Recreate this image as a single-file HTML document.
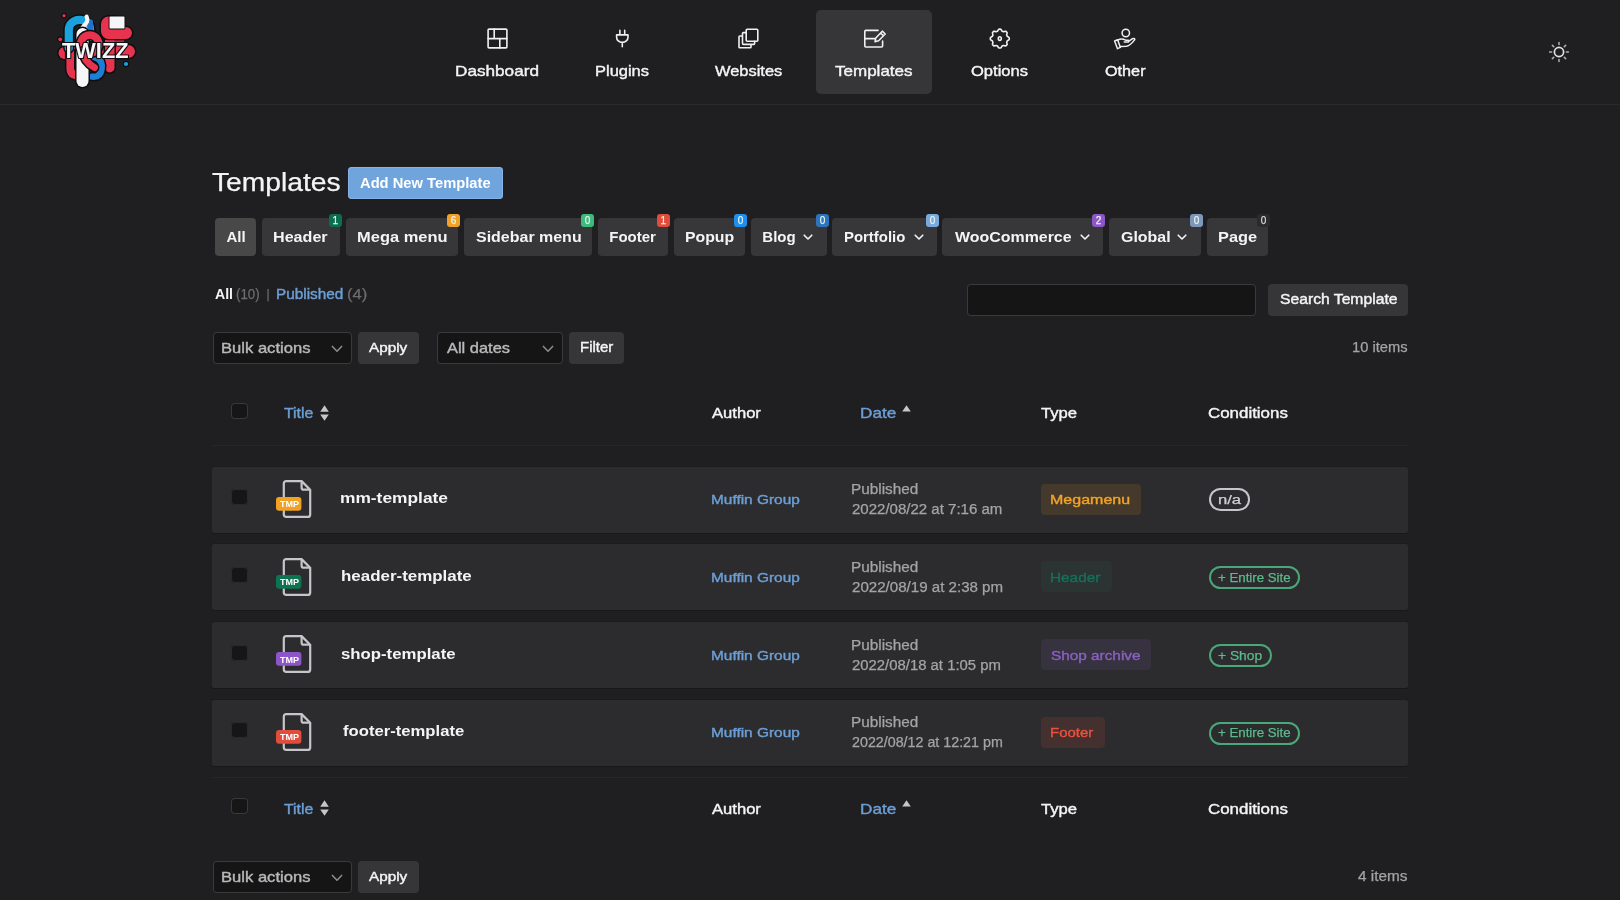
<!DOCTYPE html>
<html lang="en">
<head>
<meta charset="utf-8">
<title>Templates</title>
<style>
html,body{margin:0;padding:0}
body{width:1620px;height:900px;overflow:hidden;position:relative;background:#1f1f21;font-family:'Liberation Sans',sans-serif}
header,nav,main,ul,li,h1,article{margin:0;padding:0;list-style:none;font-weight:normal}
#app{position:absolute;left:0;top:0;width:1620px;height:900px;will-change:transform}
.b{position:absolute;display:block;box-sizing:border-box;border:0;padding:0;margin:0}
.t{position:absolute;display:block;white-space:nowrap;line-height:1;margin:0;padding:0;transform-origin:0 0;text-decoration:none;font-family:'Liberation Sans',sans-serif}
</style>
</head>
<body>
<div id="app">
<header>
<div class="b" style="left:0px;top:104px;width:1620px;height:1px;background:#2a2a2c;"></div>
<svg class="b" style="left:50px;top:5px" width="100" height="90" viewBox="0 0 100 90" role="img" aria-label="TWIZZ logo"><circle cx="14" cy="10.7" r="2.7" fill="#0e0e10"/><circle cx="14" cy="10.7" r="1.6" fill="#e8334f"/><circle cx="10.2" cy="34.3" r="3.0" fill="#0e0e10"/><circle cx="10.2" cy="34.3" r="1.9" fill="#e8334f"/><circle cx="76" cy="59" r="3.2" fill="#0e0e10"/><circle cx="76" cy="59" r="2.1" fill="#1aa2df"/><rect x="7.0" y="40.5" width="35.0" height="15.0" rx="7.5" fill="#0e0e10"/><rect x="8.5" y="42" width="32" height="12" rx="6" fill="#e8334f"/><path d="M20.2 47 V63 Q20.2 70.7 29 70.7" fill="none" stroke="#0e0e10" stroke-width="10.6" stroke-linecap="round" stroke-linejoin="round"/><path d="M20.2 47 V63 Q20.2 70.7 29 70.7" fill="none" stroke="#e8334f" stroke-width="7.6" stroke-linecap="round" stroke-linejoin="round"/><rect x="50.5" y="38.5" width="36.0" height="16.0" rx="8.0" fill="#0e0e10"/><rect x="52" y="40" width="33" height="13" rx="6.5" fill="#e8334f"/><rect x="53.5" y="28.5" width="12.5" height="40.5" rx="6.2" fill="#0e0e10"/><rect x="55" y="30" width="9.5" height="37.5" rx="4.7" fill="#e8334f"/><path d="M58.5 11.5 H66 V22 H76 A6 6 0 0 1 76 34 H58.5 A7.5 7.5 0 0 1 51 26.5 V19 A7.5 7.5 0 0 1 58.5 11.5 Z" fill="#0e0e10" stroke="#0e0e10" stroke-width="3" stroke-linejoin="round"/><path d="M58.5 11.5 H66 V22 H76 A6 6 0 0 1 76 34 H58.5 A7.5 7.5 0 0 1 51 26.5 V19 A7.5 7.5 0 0 1 58.5 11.5 Z" fill="#e8334f"/><rect x="58.6" y="10.6" width="16.8" height="13.8" rx="1.3" fill="#0e0e10"/><rect x="59.5" y="11.5" width="15" height="12" rx="0.4" fill="#f6f6f9"/><path d="M56 36.2 H74 M57 38.6 H72" stroke="#e8334f" stroke-width="1.3" fill="none"/><path d="M18.8 43 V25 C18.8 12.5 40 11 40 24 V32" fill="none" stroke="#0e0e10" stroke-width="11.2" stroke-linecap="round" stroke-linejoin="round"/><path d="M18.8 43 V25 C18.8 12.5 40 11 40 24 V32" fill="none" stroke="#1aa2df" stroke-width="8.2" stroke-linecap="round" stroke-linejoin="round"/><path d="M40.3 17 V30" stroke="#1f72c8" stroke-width="5.4" stroke-linecap="round" fill="none"/><path d="M36 19 L39 27 L30 31 L31 24 Z" fill="#b4c0ea"/><path d="M36.6 11.6 C40.5 19.5 29.5 19.5 28.8 33" stroke="#f6f6f9" stroke-width="4.2" stroke-linecap="round" fill="none"/><path d="M44 52 C52 53.5 52.2 60 51.6 64 C50.6 71.5 46 72 42 71.6" fill="none" stroke="#0e0e10" stroke-width="9.4" stroke-linecap="round" stroke-linejoin="round"/><path d="M44 52 C52 53.5 52.2 60 51.6 64 C50.6 71.5 46 72 42 71.6" fill="none" stroke="#1b7fd6" stroke-width="6.4" stroke-linecap="round" stroke-linejoin="round"/><rect x="25.0" y="21.5" width="15.0" height="62.0" rx="7.5" fill="#0e0e10"/><rect x="26.5" y="23" width="12" height="59" rx="6" fill="#f6f6f9"/><path d="M39.8 30 A9 9 0 1 1 39.7 30 Z" fill="none" stroke="#0e0e10" stroke-width="10.6" stroke-linecap="round" stroke-linejoin="round"/><path d="M39.8 30 A9 9 0 1 1 39.7 30 Z" fill="none" stroke="#e8334f" stroke-width="7.6" stroke-linecap="round" stroke-linejoin="round"/><path d="M33 46 C33.5 55 39 59.5 44.5 62.5" fill="none" stroke="#0e0e10" stroke-width="10.0" stroke-linecap="round" stroke-linejoin="round"/><path d="M33 46 C33.5 55 39 59.5 44.5 62.5" fill="none" stroke="#e8334f" stroke-width="7" stroke-linecap="round" stroke-linejoin="round"/><text x="12" y="53" font-family="'Liberation Sans',sans-serif" font-weight="700" font-size="21.5" textLength="66.5" lengthAdjust="spacingAndGlyphs" fill="#f6f6f9" stroke="#0e0e10" stroke-width="2.2" stroke-linejoin="round" style="paint-order:stroke fill">TWIZZ</text></svg>
<nav>
<div class="b navact" style="left:816px;top:10px;width:116px;height:84px;background:#363638;border-radius:5px;"></div>
<a class="t" style="left:454.5px;top:63px;font-size:15px;font-weight:500;color:#f4f4f5;transform:scaleX(1.1445);-webkit-text-stroke:0.4px;">Dashboard</a>
<a class="t" style="left:594.9px;top:63px;font-size:15px;font-weight:500;color:#f4f4f5;transform:scaleX(1.0976);-webkit-text-stroke:0.4px;">Plugins</a>
<a class="t" style="left:714.9px;top:63px;font-size:15px;font-weight:500;color:#f4f4f5;transform:scaleX(1.0951);-webkit-text-stroke:0.4px;">Websites</a>
<a class="t" style="left:835.2px;top:63px;font-size:15px;font-weight:500;color:#f4f4f5;transform:scaleX(1.1344);-webkit-text-stroke:0.4px;">Templates</a>
<a class="t" style="left:970.9px;top:63px;font-size:15px;font-weight:500;color:#f4f4f5;transform:scaleX(1.1016);-webkit-text-stroke:0.4px;">Options</a>
<a class="t" style="left:1104.6px;top:63px;font-size:15px;font-weight:500;color:#f4f4f5;transform:scaleX(1.0804);-webkit-text-stroke:0.4px;">Other</a>
<svg class="b" style="left:485px;top:26px" width="25" height="25" viewBox="0 0 25 25" fill="none" stroke="#f0f0f2" stroke-width="1.6" stroke-linecap="round" stroke-linejoin="round"><rect x="3.1" y="3.1" width="18.8" height="18.8" rx="1"/><path d="M9.2 3.1 V12.6 M3.1 12.6 H21.9 M14.8 12.6 V21.9"/></svg>
<svg class="b" style="left:612px;top:27px" width="21" height="23" viewBox="0 0 21 23" fill="none" stroke="#f0f0f2" stroke-width="1.6" stroke-linecap="round" stroke-linejoin="round"><path d="M7.9 3.4 V7.6 M12.7 3.4 V7.6 M4.6 7.9 H16 V10.2 A5.7 5.2 0 0 1 4.6 10.2 Z M10.3 15.4 V19.8"/></svg>
<svg class="b" style="left:735px;top:26px" width="26" height="25" viewBox="0 0 26 25" fill="none" stroke="#f0f0f2" stroke-width="1.6" stroke-linecap="round" stroke-linejoin="round"><rect x="11.2" y="3.2" width="11.6" height="12" rx="1"/><path d="M11.2 6.6 H8.3 Q7.5 6.6 7.5 7.4 V17.6 Q7.5 18.4 8.3 18.4 H18.8 Q19.6 18.4 19.6 17.6 V15.4 M7.5 10 H4.8 Q4 10 4 10.8 V21 Q4 21.8 4.8 21.8 H15.2 Q16 21.8 16 21 V18.6"/></svg>
<svg class="b" style="left:861px;top:26px" width="28" height="25" viewBox="0 0 28 25" fill="none" stroke="#f0f0f2" stroke-width="1.6" stroke-linecap="round" stroke-linejoin="round"><path d="M17 4.4 H4.8 Q3.8 4.4 3.8 5.4 V20 Q3.8 21 4.8 21 H20.6 Q21.6 21 21.6 20 V15 M3.8 12.6 H14"/><path d="M21.3 5.2 L24.2 8 L17.6 14.8 L14 15.6 L14.8 12 Z M19.6 7 L22.4 9.8"/></svg>
<svg class="b" style="left:987px;top:26px" width="26" height="26" viewBox="0 0 26 26" fill="none" stroke="#f0f0f2" stroke-width="1.6" stroke-linecap="round" stroke-linejoin="round"><path d="M22.25 12.60 L22.25 12.68 L22.25 12.76 L22.25 12.85 L22.24 12.93 L22.24 13.01 L22.24 13.09 L22.23 13.18 L22.23 13.26 L22.22 13.34 L22.21 13.42 L22.18 13.50 L22.12 13.58 L22.05 13.65 L21.97 13.73 L21.90 13.80 L21.81 13.87 L21.73 13.93 L21.64 14.00 L21.56 14.07 L21.47 14.13 L21.37 14.19 L21.28 14.25 L21.19 14.31 L21.09 14.36 L21.00 14.42 L20.91 14.47 L20.82 14.52 L20.73 14.58 L20.64 14.63 L20.55 14.68 L20.47 14.73 L20.39 14.78 L20.31 14.82 L20.23 14.87 L20.19 14.93 L20.17 14.99 L20.15 15.06 L20.13 15.12 L20.11 15.19 L20.08 15.25 L20.06 15.31 L20.04 15.38 L20.01 15.44 L19.99 15.50 L19.96 15.57 L19.93 15.63 L19.91 15.69 L19.88 15.75 L19.85 15.81 L19.82 15.88 L19.80 15.94 L19.77 16.00 L19.74 16.06 L19.71 16.12 L19.67 16.18 L19.66 16.25 L19.68 16.34 L19.70 16.43 L19.73 16.52 L19.75 16.61 L19.78 16.71 L19.80 16.81 L19.83 16.91 L19.86 17.01 L19.89 17.11 L19.91 17.22 L19.94 17.32 L19.96 17.43 L19.99 17.54 L20.01 17.65 L20.03 17.76 L20.04 17.86 L20.06 17.97 L20.07 18.08 L20.08 18.18 L20.08 18.29 L20.08 18.39 L20.08 18.50 L20.07 18.60 L20.04 18.67 L19.99 18.74 L19.93 18.80 L19.88 18.86 L19.82 18.92 L19.77 18.98 L19.71 19.04 L19.65 19.10 L19.60 19.16 L19.54 19.22 L19.48 19.28 L19.42 19.34 L19.36 19.40 L19.30 19.45 L19.24 19.51 L19.18 19.57 L19.12 19.62 L19.06 19.68 L19.00 19.73 L18.94 19.79 L18.87 19.84 L18.80 19.87 L18.70 19.88 L18.59 19.88 L18.49 19.88 L18.38 19.88 L18.28 19.87 L18.17 19.86 L18.06 19.84 L17.96 19.83 L17.85 19.81 L17.74 19.79 L17.63 19.76 L17.52 19.74 L17.42 19.71 L17.31 19.69 L17.21 19.66 L17.11 19.63 L17.01 19.60 L16.91 19.58 L16.81 19.55 L16.72 19.53 L16.63 19.50 L16.54 19.48 L16.45 19.46 L16.38 19.47 L16.32 19.51 L16.26 19.54 L16.20 19.57 L16.14 19.60 L16.08 19.62 L16.01 19.65 L15.95 19.68 L15.89 19.71 L15.83 19.73 L15.77 19.76 L15.70 19.79 L15.64 19.81 L15.58 19.84 L15.51 19.86 L15.45 19.88 L15.39 19.91 L15.32 19.93 L15.26 19.95 L15.19 19.97 L15.13 19.99 L15.07 20.03 L15.02 20.11 L14.98 20.19 L14.93 20.27 L14.88 20.35 L14.83 20.44 L14.78 20.53 L14.72 20.62 L14.67 20.71 L14.62 20.80 L14.56 20.89 L14.51 20.99 L14.45 21.08 L14.39 21.17 L14.33 21.27 L14.27 21.36 L14.20 21.44 L14.13 21.53 L14.07 21.61 L14.00 21.70 L13.93 21.77 L13.85 21.85 L13.78 21.92 L13.70 21.98 L13.62 22.01 L13.54 22.02 L13.46 22.03 L13.38 22.03 L13.29 22.04 L13.21 22.04 L13.13 22.04 L13.05 22.05 L12.96 22.05 L12.88 22.05 L12.80 22.05 L12.72 22.05 L12.64 22.05 L12.55 22.05 L12.47 22.04 L12.39 22.04 L12.31 22.04 L12.22 22.03 L12.14 22.03 L12.06 22.02 L11.98 22.01 L11.90 21.98 L11.82 21.92 L11.75 21.85 L11.67 21.77 L11.60 21.70 L11.53 21.61 L11.47 21.53 L11.40 21.44 L11.33 21.36 L11.27 21.27 L11.21 21.17 L11.15 21.08 L11.09 20.99 L11.04 20.89 L10.98 20.80 L10.93 20.71 L10.88 20.62 L10.82 20.53 L10.77 20.44 L10.72 20.35 L10.67 20.27 L10.62 20.19 L10.58 20.11 L10.53 20.03 L10.47 19.99 L10.41 19.97 L10.34 19.95 L10.28 19.93 L10.21 19.91 L10.15 19.88 L10.09 19.86 L10.02 19.84 L9.96 19.81 L9.90 19.79 L9.83 19.76 L9.77 19.73 L9.71 19.71 L9.65 19.68 L9.59 19.65 L9.52 19.62 L9.46 19.60 L9.40 19.57 L9.34 19.54 L9.28 19.51 L9.22 19.47 L9.15 19.46 L9.06 19.48 L8.97 19.50 L8.88 19.53 L8.79 19.55 L8.69 19.58 L8.59 19.60 L8.49 19.63 L8.39 19.66 L8.29 19.69 L8.18 19.71 L8.08 19.74 L7.97 19.76 L7.86 19.79 L7.75 19.81 L7.64 19.83 L7.54 19.84 L7.43 19.86 L7.32 19.87 L7.22 19.88 L7.11 19.88 L7.01 19.88 L6.90 19.88 L6.80 19.87 L6.73 19.84 L6.66 19.79 L6.60 19.73 L6.54 19.68 L6.48 19.62 L6.42 19.57 L6.36 19.51 L6.30 19.45 L6.24 19.40 L6.18 19.34 L6.12 19.28 L6.06 19.22 L6.00 19.16 L5.95 19.10 L5.89 19.04 L5.83 18.98 L5.78 18.92 L5.72 18.86 L5.67 18.80 L5.61 18.74 L5.56 18.67 L5.53 18.60 L5.52 18.50 L5.52 18.39 L5.52 18.29 L5.52 18.18 L5.53 18.08 L5.54 17.97 L5.56 17.86 L5.57 17.76 L5.59 17.65 L5.61 17.54 L5.64 17.43 L5.66 17.32 L5.69 17.22 L5.71 17.11 L5.74 17.01 L5.77 16.91 L5.80 16.81 L5.82 16.71 L5.85 16.61 L5.87 16.52 L5.90 16.43 L5.92 16.34 L5.94 16.25 L5.93 16.18 L5.89 16.12 L5.86 16.06 L5.83 16.00 L5.80 15.94 L5.78 15.88 L5.75 15.81 L5.72 15.75 L5.69 15.69 L5.67 15.63 L5.64 15.57 L5.61 15.50 L5.59 15.44 L5.56 15.38 L5.54 15.31 L5.52 15.25 L5.49 15.19 L5.47 15.12 L5.45 15.06 L5.43 14.99 L5.41 14.93 L5.37 14.87 L5.29 14.82 L5.21 14.78 L5.13 14.73 L5.05 14.68 L4.96 14.63 L4.87 14.58 L4.78 14.52 L4.69 14.47 L4.60 14.42 L4.51 14.36 L4.41 14.31 L4.32 14.25 L4.23 14.19 L4.13 14.13 L4.04 14.07 L3.96 14.00 L3.87 13.93 L3.79 13.87 L3.70 13.80 L3.63 13.73 L3.55 13.65 L3.48 13.58 L3.42 13.50 L3.39 13.42 L3.38 13.34 L3.37 13.26 L3.37 13.18 L3.36 13.09 L3.36 13.01 L3.36 12.93 L3.35 12.85 L3.35 12.76 L3.35 12.68 L3.35 12.60 L3.35 12.52 L3.35 12.44 L3.35 12.35 L3.36 12.27 L3.36 12.19 L3.36 12.11 L3.37 12.02 L3.37 11.94 L3.38 11.86 L3.39 11.78 L3.42 11.70 L3.48 11.62 L3.55 11.55 L3.63 11.47 L3.70 11.40 L3.79 11.33 L3.87 11.27 L3.96 11.20 L4.04 11.13 L4.13 11.07 L4.23 11.01 L4.32 10.95 L4.41 10.89 L4.51 10.84 L4.60 10.78 L4.69 10.73 L4.78 10.68 L4.87 10.62 L4.96 10.57 L5.05 10.52 L5.13 10.47 L5.21 10.42 L5.29 10.38 L5.37 10.33 L5.41 10.27 L5.43 10.21 L5.45 10.14 L5.47 10.08 L5.49 10.01 L5.52 9.95 L5.54 9.89 L5.56 9.82 L5.59 9.76 L5.61 9.70 L5.64 9.63 L5.67 9.57 L5.69 9.51 L5.72 9.45 L5.75 9.39 L5.78 9.32 L5.80 9.26 L5.83 9.20 L5.86 9.14 L5.89 9.08 L5.93 9.02 L5.94 8.95 L5.92 8.86 L5.90 8.77 L5.87 8.68 L5.85 8.59 L5.82 8.49 L5.80 8.39 L5.77 8.29 L5.74 8.19 L5.71 8.09 L5.69 7.98 L5.66 7.88 L5.64 7.77 L5.61 7.66 L5.59 7.55 L5.57 7.44 L5.56 7.34 L5.54 7.23 L5.53 7.12 L5.52 7.02 L5.52 6.91 L5.52 6.81 L5.52 6.70 L5.53 6.60 L5.56 6.53 L5.61 6.46 L5.67 6.40 L5.72 6.34 L5.78 6.28 L5.83 6.22 L5.89 6.16 L5.95 6.10 L6.00 6.04 L6.06 5.98 L6.12 5.92 L6.18 5.86 L6.24 5.80 L6.30 5.75 L6.36 5.69 L6.42 5.63 L6.48 5.58 L6.54 5.52 L6.60 5.47 L6.66 5.41 L6.73 5.36 L6.80 5.33 L6.90 5.32 L7.01 5.32 L7.11 5.32 L7.22 5.32 L7.32 5.33 L7.43 5.34 L7.54 5.36 L7.64 5.37 L7.75 5.39 L7.86 5.41 L7.97 5.44 L8.08 5.46 L8.18 5.49 L8.29 5.51 L8.39 5.54 L8.49 5.57 L8.59 5.60 L8.69 5.62 L8.79 5.65 L8.88 5.67 L8.97 5.70 L9.06 5.72 L9.15 5.74 L9.22 5.73 L9.28 5.69 L9.34 5.66 L9.40 5.63 L9.46 5.60 L9.52 5.58 L9.59 5.55 L9.65 5.52 L9.71 5.49 L9.77 5.47 L9.83 5.44 L9.90 5.41 L9.96 5.39 L10.02 5.36 L10.09 5.34 L10.15 5.32 L10.21 5.29 L10.28 5.27 L10.34 5.25 L10.41 5.23 L10.47 5.21 L10.53 5.17 L10.58 5.09 L10.62 5.01 L10.67 4.93 L10.72 4.85 L10.77 4.76 L10.82 4.67 L10.88 4.58 L10.93 4.49 L10.98 4.40 L11.04 4.31 L11.09 4.21 L11.15 4.12 L11.21 4.03 L11.27 3.93 L11.33 3.84 L11.40 3.76 L11.47 3.67 L11.53 3.59 L11.60 3.50 L11.67 3.43 L11.75 3.35 L11.82 3.28 L11.90 3.22 L11.98 3.19 L12.06 3.18 L12.14 3.17 L12.22 3.17 L12.31 3.16 L12.39 3.16 L12.47 3.16 L12.55 3.15 L12.64 3.15 L12.72 3.15 L12.80 3.15 L12.88 3.15 L12.96 3.15 L13.05 3.15 L13.13 3.16 L13.21 3.16 L13.29 3.16 L13.38 3.17 L13.46 3.17 L13.54 3.18 L13.62 3.19 L13.70 3.22 L13.78 3.28 L13.85 3.35 L13.93 3.43 L14.00 3.50 L14.07 3.59 L14.13 3.67 L14.20 3.76 L14.27 3.84 L14.33 3.93 L14.39 4.03 L14.45 4.12 L14.51 4.21 L14.56 4.31 L14.62 4.40 L14.67 4.49 L14.72 4.58 L14.78 4.67 L14.83 4.76 L14.88 4.85 L14.93 4.93 L14.98 5.01 L15.02 5.09 L15.07 5.17 L15.13 5.21 L15.19 5.23 L15.26 5.25 L15.32 5.27 L15.39 5.29 L15.45 5.32 L15.51 5.34 L15.58 5.36 L15.64 5.39 L15.70 5.41 L15.77 5.44 L15.83 5.47 L15.89 5.49 L15.95 5.52 L16.01 5.55 L16.08 5.58 L16.14 5.60 L16.20 5.63 L16.26 5.66 L16.32 5.69 L16.38 5.73 L16.45 5.74 L16.54 5.72 L16.63 5.70 L16.72 5.67 L16.81 5.65 L16.91 5.62 L17.01 5.60 L17.11 5.57 L17.21 5.54 L17.31 5.51 L17.42 5.49 L17.52 5.46 L17.63 5.44 L17.74 5.41 L17.85 5.39 L17.96 5.37 L18.06 5.36 L18.17 5.34 L18.28 5.33 L18.38 5.32 L18.49 5.32 L18.59 5.32 L18.70 5.32 L18.80 5.33 L18.87 5.36 L18.94 5.41 L19.00 5.47 L19.06 5.52 L19.12 5.58 L19.18 5.63 L19.24 5.69 L19.30 5.75 L19.36 5.80 L19.42 5.86 L19.48 5.92 L19.54 5.98 L19.60 6.04 L19.65 6.10 L19.71 6.16 L19.77 6.22 L19.82 6.28 L19.88 6.34 L19.93 6.40 L19.99 6.46 L20.04 6.53 L20.07 6.60 L20.08 6.70 L20.08 6.81 L20.08 6.91 L20.08 7.02 L20.07 7.12 L20.06 7.23 L20.04 7.34 L20.03 7.44 L20.01 7.55 L19.99 7.66 L19.96 7.77 L19.94 7.88 L19.91 7.98 L19.89 8.09 L19.86 8.19 L19.83 8.29 L19.80 8.39 L19.78 8.49 L19.75 8.59 L19.73 8.68 L19.70 8.77 L19.68 8.86 L19.66 8.95 L19.67 9.02 L19.71 9.08 L19.74 9.14 L19.77 9.20 L19.80 9.26 L19.82 9.32 L19.85 9.39 L19.88 9.45 L19.91 9.51 L19.93 9.57 L19.96 9.63 L19.99 9.70 L20.01 9.76 L20.04 9.82 L20.06 9.89 L20.08 9.95 L20.11 10.01 L20.13 10.08 L20.15 10.14 L20.17 10.21 L20.19 10.27 L20.23 10.33 L20.31 10.38 L20.39 10.42 L20.47 10.47 L20.55 10.52 L20.64 10.57 L20.73 10.62 L20.82 10.68 L20.91 10.73 L21.00 10.78 L21.09 10.84 L21.19 10.89 L21.28 10.95 L21.37 11.01 L21.47 11.07 L21.56 11.13 L21.64 11.20 L21.73 11.27 L21.81 11.33 L21.90 11.40 L21.97 11.47 L22.05 11.55 L22.12 11.62 L22.18 11.70 L22.21 11.78 L22.22 11.86 L22.23 11.94 L22.23 12.02 L22.24 12.11 L22.24 12.19 L22.24 12.27 L22.25 12.35 L22.25 12.44 L22.25 12.52 Z"/><ellipse cx="12.8" cy="12.6" rx="1.5" ry="1.9"/></svg>
<svg class="b" style="left:1111px;top:26px" width="27" height="25" viewBox="0 0 27 25" fill="none" stroke="#f0f0f2" stroke-width="1.5" stroke-linecap="round" stroke-linejoin="round"><circle cx="14.8" cy="7" r="3.7"/><path d="M3.6 15 L6.6 13.8 L9.4 21.4 L6.4 22.6 Z"/><path d="M6.8 14.2 C9.5 12.6 12 12.8 14.5 14.2 H17.2 Q18.6 14.6 17.4 15.9 H13.2 M17.6 15.4 L21.6 12.6 Q23.4 12 23.8 13.6 C21.5 16.6 18.5 19.6 15.5 20.2 L9.2 20.6"/></svg>
</nav>
<svg class="b" style="left:1547.1px;top:39.9px" width="24" height="24" viewBox="0 0 24 24" fill="none" stroke="#e2e2e4" stroke-width="1.7" stroke-linecap="round"><circle cx="12" cy="12" r="4.6"/><path d="M19.40 12.00 L21.40 12.00 M17.23 17.23 L18.65 18.65 M12.00 19.40 L12.00 21.40 M6.77 17.23 L5.35 18.65 M4.60 12.00 L2.60 12.00 M6.77 6.77 L5.35 5.35 M12.00 4.60 L12.00 2.60 M17.23 6.77 L18.65 5.35 " stroke="#b2b2b5" stroke-width="1.5"/></svg>
</header>
<main>
<h1 class="t" style="left:212.0px;top:170px;font-size:25px;font-weight:400;color:#f4f4f5;transform:scaleX(1.1279);-webkit-text-stroke:0.25px;">Templates</h1>
<a class="b" style="left:348px;top:167px;width:155px;height:32px;background:#6fa4dd;border-radius:4px;box-shadow:inset 0 0 0 1px #85b3e6;"></a>
<span class="t" style="left:360.3px;top:176px;font-size:14px;font-weight:700;color:#ffffff;transform:scaleX(1.0512);">Add New Template</span>
<ul class="tabs">
<li>
<div class="b tab" style="left:215px;top:218px;width:41px;height:38px;background:#484849;border-radius:4px;"></div>
<span class="t" style="left:226.5px;top:229px;font-size:15px;font-weight:700;color:#f4f4f5;">All</span>
</li>
<li>
<div class="b tab" style="left:262px;top:218px;width:78px;height:38px;background:#373739;border-radius:4px;"></div>
<span class="t" style="left:273.4px;top:229px;font-size:15px;font-weight:700;color:#f4f4f5;transform:scaleX(1.0738);">Header</span>
<div class="b cnt" style="left:329px;top:214px;width:13px;height:13px;background:#0d6e4d;border-radius:3px;"></div>
<span class="t" style="left:332.6px;top:216px;font-size:10px;font-weight:400;color:#e8f4ee;-webkit-text-stroke:0.25px;">1</span>
</li>
<li>
<div class="b tab" style="left:346px;top:218px;width:112px;height:38px;background:#373739;border-radius:4px;"></div>
<span class="t" style="left:356.7px;top:229px;font-size:15px;font-weight:700;color:#f4f4f5;transform:scaleX(1.0981);">Mega menu</span>
<div class="b cnt" style="left:447px;top:214px;width:13px;height:13px;background:#f0a126;border-radius:3px;"></div>
<span class="t" style="left:450.7px;top:216px;font-size:10px;font-weight:400;color:#e8f4ee;-webkit-text-stroke:0.25px;">6</span>
</li>
<li>
<div class="b tab" style="left:464px;top:218px;width:128px;height:38px;background:#373739;border-radius:4px;"></div>
<span class="t" style="left:475.6px;top:229px;font-size:15px;font-weight:700;color:#f4f4f5;transform:scaleX(1.0650);">Sidebar menu</span>
<div class="b cnt" style="left:581px;top:214px;width:13px;height:13px;background:#3dbb7c;border-radius:3px;"></div>
<span class="t" style="left:584.7px;top:216px;font-size:10px;font-weight:400;color:#e8f4ee;-webkit-text-stroke:0.25px;">0</span>
</li>
<li>
<div class="b tab" style="left:598px;top:218px;width:70px;height:38px;background:#373739;border-radius:4px;"></div>
<span class="t" style="left:609.3px;top:229px;font-size:15px;font-weight:700;color:#f4f4f5;">Footer</span>
<div class="b cnt" style="left:657px;top:214px;width:13px;height:13px;background:#e24c3c;border-radius:3px;"></div>
<span class="t" style="left:660.6px;top:216px;font-size:10px;font-weight:400;color:#e8f4ee;-webkit-text-stroke:0.25px;">1</span>
</li>
<li>
<div class="b tab" style="left:674px;top:218px;width:71px;height:38px;background:#373739;border-radius:4px;"></div>
<span class="t" style="left:684.8px;top:229px;font-size:15px;font-weight:700;color:#f4f4f5;transform:scaleX(1.0544);">Popup</span>
<div class="b cnt" style="left:734px;top:214px;width:13px;height:13px;background:#1c8ff0;border-radius:3px;"></div>
<span class="t" style="left:737.7px;top:216px;font-size:10px;font-weight:400;color:#e8f4ee;-webkit-text-stroke:0.25px;">0</span>
</li>
<li>
<div class="b tab" style="left:751px;top:218px;width:76px;height:38px;background:#373739;border-radius:4px;"></div>
<span class="t" style="left:762.3px;top:229px;font-size:15px;font-weight:700;color:#f4f4f5;">Blog</span>
<svg class="b" style="left:803.2px;top:232px" width="10" height="10" viewBox="0 0 10 10"><path d="M1.2 3.2 L5 7 L8.8 3.2" fill="none" stroke="#f4f4f5" stroke-width="1.6" stroke-linecap="round" stroke-linejoin="round"/></svg>
<div class="b cnt" style="left:816px;top:214px;width:13px;height:13px;background:#2d74bd;border-radius:3px;"></div>
<span class="t" style="left:819.7px;top:216px;font-size:10px;font-weight:400;color:#e8f4ee;-webkit-text-stroke:0.25px;">0</span>
</li>
<li>
<div class="b tab" style="left:832px;top:218px;width:105px;height:38px;background:#373739;border-radius:4px;"></div>
<span class="t" style="left:844.0px;top:229px;font-size:15px;font-weight:700;color:#f4f4f5;transform:scaleX(0.9944);">Portfolio</span>
<svg class="b" style="left:913.7px;top:232px" width="10" height="10" viewBox="0 0 10 10"><path d="M1.2 3.2 L5 7 L8.8 3.2" fill="none" stroke="#f4f4f5" stroke-width="1.6" stroke-linecap="round" stroke-linejoin="round"/></svg>
<div class="b cnt" style="left:926px;top:214px;width:13px;height:13px;background:#7aa9de;border-radius:3px;"></div>
<span class="t" style="left:929.7px;top:216px;font-size:10px;font-weight:400;color:#e8f4ee;-webkit-text-stroke:0.25px;">0</span>
</li>
<li>
<div class="b tab" style="left:942px;top:218px;width:161px;height:38px;background:#373739;border-radius:4px;"></div>
<span class="t" style="left:954.9px;top:229px;font-size:15px;font-weight:700;color:#f4f4f5;transform:scaleX(1.0624);">WooCommerce</span>
<svg class="b" style="left:1079.8px;top:232px" width="10" height="10" viewBox="0 0 10 10"><path d="M1.2 3.2 L5 7 L8.8 3.2" fill="none" stroke="#f4f4f5" stroke-width="1.6" stroke-linecap="round" stroke-linejoin="round"/></svg>
<div class="b cnt" style="left:1092px;top:214px;width:13px;height:13px;background:#8e55c8;border-radius:3px;"></div>
<span class="t" style="left:1095.7px;top:216px;font-size:10px;font-weight:400;color:#e8f4ee;-webkit-text-stroke:0.25px;">2</span>
</li>
<li>
<div class="b tab" style="left:1109px;top:218px;width:92px;height:38px;background:#373739;border-radius:4px;"></div>
<span class="t" style="left:1120.6px;top:229px;font-size:15px;font-weight:700;color:#f4f4f5;transform:scaleX(1.0623);">Global</span>
<svg class="b" style="left:1177.3px;top:232px" width="10" height="10" viewBox="0 0 10 10"><path d="M1.2 3.2 L5 7 L8.8 3.2" fill="none" stroke="#f4f4f5" stroke-width="1.6" stroke-linecap="round" stroke-linejoin="round"/></svg>
<div class="b cnt" style="left:1190px;top:214px;width:13px;height:13px;background:#7e98ba;border-radius:3px;"></div>
<span class="t" style="left:1193.7px;top:216px;font-size:10px;font-weight:400;color:#e8f4ee;-webkit-text-stroke:0.25px;">0</span>
</li>
<li>
<div class="b tab" style="left:1207px;top:218px;width:61px;height:38px;background:#373739;border-radius:4px;"></div>
<span class="t" style="left:1217.7px;top:229px;font-size:15px;font-weight:700;color:#f4f4f5;transform:scaleX(1.0898);">Page</span>
<div class="b cnt" style="left:1257px;top:214px;width:13px;height:13px;background:#2b2b2d;border-radius:3px;"></div>
<span class="t" style="left:1260.7px;top:216px;font-size:10px;font-weight:400;color:#d8d8da;-webkit-text-stroke:0.25px;">0</span>
</li>
</ul>
<span class="t" style="left:214.5px;top:287px;font-size:14px;font-weight:700;color:#f4f4f5;transform:scaleX(1.0086);">All</span>
<span class="t" style="left:236.1px;top:287px;font-size:14px;font-weight:400;color:#6d6d70;transform:scaleX(0.9482);-webkit-text-stroke:0.25px;">(10)</span>
<span class="t" style="left:266.5px;top:288px;font-size:12px;font-weight:400;color:#6d6d70;-webkit-text-stroke:0.25px;">|</span>
<a class="t" style="left:276.4px;top:287px;font-size:14px;font-weight:500;color:#6c9fd6;transform:scaleX(1.0941);-webkit-text-stroke:0.4px;">Published</a>
<span class="t" style="left:347.3px;top:287px;font-size:14px;font-weight:400;color:#6d6d70;transform:scaleX(1.1897);-webkit-text-stroke:0.25px;">(4)</span>
<div class="b inp" style="left:967px;top:284px;width:289px;height:32px;border-radius:4px;background:#151516;box-shadow:inset 0 0 0 1px #3a3a3d;"></div>
<button class="b" style="left:1268px;top:284px;width:140px;height:32px;background:#363638;border-radius:4px;"></button>
<span class="t" style="left:1279.7px;top:293px;font-size:13.8px;font-weight:500;color:#f4f4f5;transform:scaleX(1.1373);-webkit-text-stroke:0.4px;">Search Template</span>
<div class="b sel" style="left:213px;top:332px;width:139px;height:32px;border-radius:4px;background:#151516;box-shadow:inset 0 0 0 1px #3a3a3d;"></div>
<span class="t" style="left:221.4px;top:340px;font-size:15px;font-weight:500;color:#b9b9bc;transform:scaleX(1.1061);-webkit-text-stroke:0.4px;">Bulk actions</span>
<svg class="b" style="left:331.0px;top:345.0px" width="12" height="8" viewBox="0 0 12 8"><path d="M1.4 1.4 L6 6.2 L10.6 1.4" fill="none" stroke="#8e8e91" stroke-width="1.5" stroke-linecap="round" stroke-linejoin="round"/></svg>
<button class="b" style="left:358px;top:332px;width:61px;height:32px;background:#363638;border-radius:4px;"></button>
<span class="t" style="left:369.1px;top:341px;font-size:13.3px;font-weight:500;color:#f4f4f5;transform:scaleX(1.1496);-webkit-text-stroke:0.4px;">Apply</span>
<div class="b sel" style="left:437px;top:332px;width:126px;height:32px;border-radius:4px;background:#151516;box-shadow:inset 0 0 0 1px #3a3a3d;"></div>
<span class="t" style="left:446.6px;top:340px;font-size:15px;font-weight:500;color:#b9b9bc;transform:scaleX(1.0949);-webkit-text-stroke:0.4px;">All dates</span>
<svg class="b" style="left:542.0px;top:345.0px" width="12" height="8" viewBox="0 0 12 8"><path d="M1.4 1.4 L6 6.2 L10.6 1.4" fill="none" stroke="#8e8e91" stroke-width="1.5" stroke-linecap="round" stroke-linejoin="round"/></svg>
<button class="b" style="left:569px;top:332px;width:55px;height:32px;background:#363638;border-radius:4px;"></button>
<span class="t" style="left:579.7px;top:341px;font-size:13.8px;font-weight:500;color:#f4f4f5;transform:scaleX(1.0834);-webkit-text-stroke:0.4px;">Filter</span>
<span class="t" style="left:1352.3px;top:341px;font-size:13.8px;font-weight:400;color:#a4a4a7;transform:scaleX(1.0646);-webkit-text-stroke:0.25px;">10 items</span>
<div class="b chk" style="left:231px;top:403px;width:17px;height:16px;border-radius:4px;background:#161617;box-shadow:inset 0 0 0 1px #39393c;"></div>
<a class="t" style="left:284.4px;top:405px;font-size:15px;font-weight:500;color:#6c9fd6;transform:scaleX(1.0566);-webkit-text-stroke:0.4px;">Title</a>
<svg class="b" style="left:320px;top:404.9px" width="9" height="16" viewBox="0 0 9 16"><path d="M4.5 0.2 L8.8 6.8 H0.2 Z M4.5 15.8 L8.8 9.4 H0.2 Z" fill="#c6c6c9"/></svg>
<span class="t" style="left:711.9px;top:405px;font-size:15px;font-weight:500;color:#f4f4f5;transform:scaleX(1.1064);-webkit-text-stroke:0.4px;">Author</span>
<a class="t" style="left:859.7px;top:405px;font-size:15px;font-weight:500;color:#6c9fd6;transform:scaleX(1.1455);-webkit-text-stroke:0.4px;">Date</a>
<svg class="b" style="left:901.5px;top:404.9px" width="9" height="7" viewBox="0 0 9 7"><path d="M4.5 0.2 L8.8 6.5 H0.2 Z" fill="#c6c6c9"/></svg>
<span class="t" style="left:1040.9px;top:405px;font-size:15px;font-weight:500;color:#f4f4f5;transform:scaleX(1.1098);-webkit-text-stroke:0.4px;">Type</span>
<span class="t" style="left:1208.4px;top:405px;font-size:15px;font-weight:500;color:#f4f4f5;transform:scaleX(1.1269);-webkit-text-stroke:0.4px;">Conditions</span>
<div class="b" style="left:212px;top:445px;width:1196px;height:1px;background:#262628;"></div>
<article>
<div class="b row" style="left:212px;top:467px;width:1196px;height:66px;background:#2c2c2e;border-radius:2px;box-shadow:0 1px 0 #18181a,0 -1px 0 #1c1c1e;"></div>
<div class="b chk" style="left:231px;top:489px;width:17px;height:16px;border-radius:4px;background:#161617;box-shadow:inset 0 0 0 1px #2a2a2c;"></div>
<svg class="b" style="left:275px;top:480.0px" width="38" height="40" viewBox="0 0 38 40"><path d="M11.3 1.1 H26.6 L35.2 9.7 V34.4 Q35.2 36.9 32.7 36.9 H11.3 Q8.8 36.9 8.8 34.4 V3.6 Q8.8 1.1 11.3 1.1 Z" fill="none" stroke="#c6c6ca" stroke-width="2.2" stroke-linejoin="round"/><path d="M26.6 1.6 V7.7 Q26.6 9.7 28.6 9.7 H34.7" fill="none" stroke="#c6c6ca" stroke-width="2.2" stroke-linejoin="round"/><rect x="1" y="17" width="25.4" height="13.8" rx="3" fill="#f0a126"/></svg>
<span class="t" style="left:279.5px;top:500px;font-size:9px;font-weight:700;color:#ffffff;transform:scaleX(1.0034);">TMP</span>
<a class="t" style="left:339.7px;top:490px;font-size:15.5px;font-weight:700;color:#f4f4f5;transform:scaleX(1.1190);">mm-template</a>
<a class="t" style="left:710.6px;top:493px;font-size:13.3px;font-weight:500;color:#6c9fd6;transform:scaleX(1.1592);-webkit-text-stroke:0.4px;">Muffin Group</a>
<span class="t" style="left:851.4px;top:483px;font-size:13.8px;font-weight:400;color:#a4a4a7;transform:scaleX(1.1108);-webkit-text-stroke:0.25px;">Published</span>
<span class="t" style="left:852.1px;top:503px;font-size:13.8px;font-weight:400;color:#a4a4a7;transform:scaleX(1.0885);-webkit-text-stroke:0.25px;">2022/08/22 at 7:16 am</span>
<div class="b type" style="left:1041px;top:484px;width:100px;height:31px;background:#45392b;border-radius:4px;"></div>
<span class="t" style="left:1050.2px;top:493px;font-size:13.3px;font-weight:500;color:#f2a427;transform:scaleX(1.2039);-webkit-text-stroke:0.4px;">Megamenu</span>
<div class="b pill" style="left:1209px;top:488px;width:41px;height:23px;border-radius:12px;box-shadow:inset 0 0 0 2px #c6c6ce;"></div>
<span class="t" style="left:1217.6px;top:494px;font-size:12.5px;font-weight:400;color:#cfcfd6;transform:scaleX(1.3302);-webkit-text-stroke:0.25px;">n/a</span>
</article>
<article>
<div class="b row" style="left:212px;top:544px;width:1196px;height:66px;background:#2c2c2e;border-radius:2px;box-shadow:0 1px 0 #18181a,0 -1px 0 #1c1c1e;"></div>
<div class="b chk" style="left:231px;top:567px;width:17px;height:16px;border-radius:4px;background:#161617;box-shadow:inset 0 0 0 1px #2a2a2c;"></div>
<svg class="b" style="left:275px;top:557.7px" width="38" height="40" viewBox="0 0 38 40"><path d="M11.3 1.1 H26.6 L35.2 9.7 V34.4 Q35.2 36.9 32.7 36.9 H11.3 Q8.8 36.9 8.8 34.4 V3.6 Q8.8 1.1 11.3 1.1 Z" fill="none" stroke="#c6c6ca" stroke-width="2.2" stroke-linejoin="round"/><path d="M26.6 1.6 V7.7 Q26.6 9.7 28.6 9.7 H34.7" fill="none" stroke="#c6c6ca" stroke-width="2.2" stroke-linejoin="round"/><rect x="1" y="17" width="25.4" height="13.8" rx="3" fill="#0d7350"/></svg>
<span class="t" style="left:279.5px;top:578px;font-size:9px;font-weight:700;color:#ffffff;transform:scaleX(1.0034);">TMP</span>
<a class="t" style="left:340.6px;top:568px;font-size:15.5px;font-weight:700;color:#f4f4f5;transform:scaleX(1.0918);">header-template</a>
<a class="t" style="left:710.6px;top:571px;font-size:13.3px;font-weight:500;color:#6c9fd6;transform:scaleX(1.1592);-webkit-text-stroke:0.4px;">Muffin Group</a>
<span class="t" style="left:851.4px;top:561px;font-size:13.8px;font-weight:400;color:#a4a4a7;transform:scaleX(1.1108);-webkit-text-stroke:0.25px;">Published</span>
<span class="t" style="left:852.1px;top:581px;font-size:13.8px;font-weight:400;color:#a4a4a7;transform:scaleX(1.0943);-webkit-text-stroke:0.25px;">2022/08/19 at 2:38 pm</span>
<div class="b type" style="left:1041px;top:561px;width:71px;height:31px;background:#2b3432;border-radius:4px;"></div>
<span class="t" style="left:1050.2px;top:571px;font-size:13.3px;font-weight:500;color:#17705a;transform:scaleX(1.1535);-webkit-text-stroke:0.4px;">Header</span>
<div class="b pill" style="left:1209px;top:566px;width:91px;height:23px;border-radius:12px;box-shadow:inset 0 0 0 2px #4aa77a;"></div>
<span class="t" style="left:1218.4px;top:572px;font-size:12.5px;font-weight:400;color:#5cba8b;transform:scaleX(1.0611);-webkit-text-stroke:0.25px;">+ Entire Site</span>
</article>
<article>
<div class="b row" style="left:212px;top:622px;width:1196px;height:66px;background:#2c2c2e;border-radius:2px;box-shadow:0 1px 0 #18181a,0 -1px 0 #1c1c1e;"></div>
<div class="b chk" style="left:231px;top:645px;width:17px;height:16px;border-radius:4px;background:#161617;box-shadow:inset 0 0 0 1px #2a2a2c;"></div>
<svg class="b" style="left:275px;top:635.4px" width="38" height="40" viewBox="0 0 38 40"><path d="M11.3 1.1 H26.6 L35.2 9.7 V34.4 Q35.2 36.9 32.7 36.9 H11.3 Q8.8 36.9 8.8 34.4 V3.6 Q8.8 1.1 11.3 1.1 Z" fill="none" stroke="#c6c6ca" stroke-width="2.2" stroke-linejoin="round"/><path d="M26.6 1.6 V7.7 Q26.6 9.7 28.6 9.7 H34.7" fill="none" stroke="#c6c6ca" stroke-width="2.2" stroke-linejoin="round"/><rect x="1" y="17" width="25.4" height="13.8" rx="3" fill="#8e55c8"/></svg>
<span class="t" style="left:279.5px;top:656px;font-size:9px;font-weight:700;color:#ffffff;transform:scaleX(1.0034);">TMP</span>
<a class="t" style="left:340.9px;top:646px;font-size:15.5px;font-weight:700;color:#f4f4f5;transform:scaleX(1.0812);">shop-template</a>
<a class="t" style="left:710.6px;top:649px;font-size:13.3px;font-weight:500;color:#6c9fd6;transform:scaleX(1.1592);-webkit-text-stroke:0.4px;">Muffin Group</a>
<span class="t" style="left:851.4px;top:639px;font-size:13.8px;font-weight:400;color:#a4a4a7;transform:scaleX(1.1108);-webkit-text-stroke:0.25px;">Published</span>
<span class="t" style="left:852.1px;top:659px;font-size:13.8px;font-weight:400;color:#a4a4a7;transform:scaleX(1.0784);-webkit-text-stroke:0.25px;">2022/08/18 at 1:05 pm</span>
<div class="b type" style="left:1041px;top:639px;width:110px;height:31px;background:#36323f;border-radius:4px;"></div>
<span class="t" style="left:1050.7px;top:649px;font-size:13.3px;font-weight:500;color:#8961bf;transform:scaleX(1.1529);-webkit-text-stroke:0.4px;">Shop archive</span>
<div class="b pill" style="left:1209px;top:644px;width:63px;height:23px;border-radius:12px;box-shadow:inset 0 0 0 2px #4aa77a;"></div>
<span class="t" style="left:1218.4px;top:650px;font-size:12.5px;font-weight:400;color:#5cba8b;transform:scaleX(1.1038);-webkit-text-stroke:0.25px;">+ Shop</span>
</article>
<article>
<div class="b row" style="left:212px;top:700px;width:1196px;height:66px;background:#2c2c2e;border-radius:2px;box-shadow:0 1px 0 #18181a,0 -1px 0 #1c1c1e;"></div>
<div class="b chk" style="left:231px;top:722px;width:17px;height:16px;border-radius:4px;background:#161617;box-shadow:inset 0 0 0 1px #2a2a2c;"></div>
<svg class="b" style="left:275px;top:713.1px" width="38" height="40" viewBox="0 0 38 40"><path d="M11.3 1.1 H26.6 L35.2 9.7 V34.4 Q35.2 36.9 32.7 36.9 H11.3 Q8.8 36.9 8.8 34.4 V3.6 Q8.8 1.1 11.3 1.1 Z" fill="none" stroke="#c6c6ca" stroke-width="2.2" stroke-linejoin="round"/><path d="M26.6 1.6 V7.7 Q26.6 9.7 28.6 9.7 H34.7" fill="none" stroke="#c6c6ca" stroke-width="2.2" stroke-linejoin="round"/><rect x="1" y="17" width="25.4" height="13.8" rx="3" fill="#e24c3c"/></svg>
<span class="t" style="left:279.5px;top:733px;font-size:9px;font-weight:700;color:#ffffff;transform:scaleX(1.0034);">TMP</span>
<a class="t" style="left:342.8px;top:723px;font-size:15.5px;font-weight:700;color:#f4f4f5;transform:scaleX(1.0745);">footer-template</a>
<a class="t" style="left:710.6px;top:726px;font-size:13.3px;font-weight:500;color:#6c9fd6;transform:scaleX(1.1592);-webkit-text-stroke:0.4px;">Muffin Group</a>
<span class="t" style="left:851.4px;top:716px;font-size:13.8px;font-weight:400;color:#a4a4a7;transform:scaleX(1.1108);-webkit-text-stroke:0.25px;">Published</span>
<span class="t" style="left:852.1px;top:736px;font-size:13.8px;font-weight:400;color:#a4a4a7;transform:scaleX(1.0346);-webkit-text-stroke:0.25px;">2022/08/12 at 12:21 pm</span>
<div class="b type" style="left:1041px;top:717px;width:64px;height:31px;background:#43302f;border-radius:4px;"></div>
<span class="t" style="left:1050.2px;top:726px;font-size:13.3px;font-weight:500;color:#ea513e;transform:scaleX(1.1240);-webkit-text-stroke:0.4px;">Footer</span>
<div class="b pill" style="left:1209px;top:722px;width:91px;height:23px;border-radius:12px;box-shadow:inset 0 0 0 2px #4aa77a;"></div>
<span class="t" style="left:1218.4px;top:727px;font-size:12.5px;font-weight:400;color:#5cba8b;transform:scaleX(1.0611);-webkit-text-stroke:0.25px;">+ Entire Site</span>
</article>
<div class="b" style="left:212px;top:777px;width:1196px;height:1px;background:#262628;"></div>
<div class="b chk" style="left:231px;top:798px;width:17px;height:16px;border-radius:4px;background:#161617;box-shadow:inset 0 0 0 1px #39393c;"></div>
<a class="t" style="left:284.4px;top:801px;font-size:15px;font-weight:500;color:#6c9fd6;transform:scaleX(1.0566);-webkit-text-stroke:0.4px;">Title</a>
<svg class="b" style="left:320px;top:800.1px" width="9" height="16" viewBox="0 0 9 16"><path d="M4.5 0.2 L8.8 6.8 H0.2 Z M4.5 15.8 L8.8 9.4 H0.2 Z" fill="#c6c6c9"/></svg>
<span class="t" style="left:711.9px;top:801px;font-size:15px;font-weight:500;color:#f4f4f5;transform:scaleX(1.1064);-webkit-text-stroke:0.4px;">Author</span>
<a class="t" style="left:859.7px;top:801px;font-size:15px;font-weight:500;color:#6c9fd6;transform:scaleX(1.1455);-webkit-text-stroke:0.4px;">Date</a>
<svg class="b" style="left:901.5px;top:800.1px" width="9" height="7" viewBox="0 0 9 7"><path d="M4.5 0.2 L8.8 6.5 H0.2 Z" fill="#c6c6c9"/></svg>
<span class="t" style="left:1040.9px;top:801px;font-size:15px;font-weight:500;color:#f4f4f5;transform:scaleX(1.1098);-webkit-text-stroke:0.4px;">Type</span>
<span class="t" style="left:1208.4px;top:801px;font-size:15px;font-weight:500;color:#f4f4f5;transform:scaleX(1.1269);-webkit-text-stroke:0.4px;">Conditions</span>
<div class="b sel" style="left:213px;top:861px;width:139px;height:32px;border-radius:4px;background:#151516;box-shadow:inset 0 0 0 1px #3a3a3d;"></div>
<span class="t" style="left:221.4px;top:869px;font-size:15px;font-weight:500;color:#b9b9bc;transform:scaleX(1.1061);-webkit-text-stroke:0.4px;">Bulk actions</span>
<svg class="b" style="left:331.0px;top:874.0px" width="12" height="8" viewBox="0 0 12 8"><path d="M1.4 1.4 L6 6.2 L10.6 1.4" fill="none" stroke="#8e8e91" stroke-width="1.5" stroke-linecap="round" stroke-linejoin="round"/></svg>
<button class="b" style="left:358px;top:861px;width:61px;height:32px;background:#363638;border-radius:4px;"></button>
<span class="t" style="left:369.1px;top:870px;font-size:13.3px;font-weight:500;color:#f4f4f5;transform:scaleX(1.1496);-webkit-text-stroke:0.4px;">Apply</span>
<span class="t" style="left:1358.4px;top:870px;font-size:13.8px;font-weight:400;color:#a4a4a7;transform:scaleX(1.1110);-webkit-text-stroke:0.25px;">4 items</span>
</main>
</div>
</body>
</html>
